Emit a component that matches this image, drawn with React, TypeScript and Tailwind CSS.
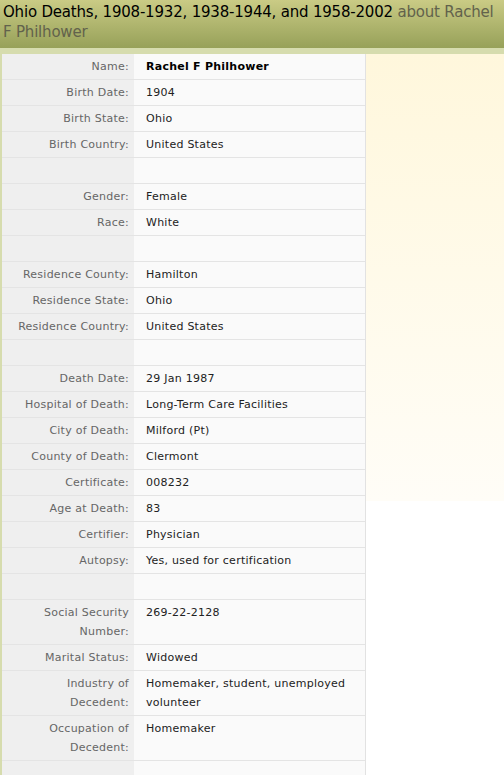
const rows: [string, string][] = [
  ['Name:', 'Rachel F Philhower'],
  ['Birth Date:', '1904'],
  ['Birth State:', 'Ohio'],
  ['Birth Country:', 'United States'],
  ['', ''],
  ['Gender:', 'Female'],
  ['Race:', 'White'],
  ['', ''],
  ['Residence County:', 'Hamilton'],
  ['Residence State:', 'Ohio'],
  ['Residence Country:', 'United States'],
  ['', ''],
  ['Death Date:', '29 Jan 1987'],
  ['Hospital of Death:', 'Long-Term Care Facilities'],
  ['City of Death:', 'Milford (Pt)'],
  ['County of Death:', 'Clermont'],
  ['Certificate:', '008232'],
  ['Age at Death:', '83'],
  ['Certifier:', 'Physician'],
  ['Autopsy:', 'Yes, used for certification'],
  ['', ''],
  ['Social Security Number:', '269-22-2128'],
  ['Marital Status:', 'Widowed'],
  ['Industry of Decedent:', 'Homemaker, student, unemployed volunteer'],
  ['Occupation of Decedent:', 'Homemaker'],
  ['', ''],
]

export default function App() {
  return (
    <div className="min-h-[775px] bg-white font-['DejaVu_Sans',Verdana,sans-serif]">
      <div className="bg-gradient-to-b from-[#cacb85] to-[#97a159] px-[3px] pt-[2px] pb-[6px] text-[15px] leading-[20px] tracking-[-0.2px] text-black">
        Ohio Deaths, 1908-1932, 1938-1944, and 1958-2002{' '}
        <span className="text-[#62624c]">about Rachel F Philhower</span>
      </div>
      <div className="h-[6px] bg-[#d6dcae]" />
      <div className="flex">
        <div className="w-[366px] border-l-[2px] border-[#d6dcae]">
          <table className="w-full border-collapse text-[11px] leading-[19px] tracking-[0.25px]">
            <tbody>
              {rows.map(([label, value], i) => (
                <tr key={i} className="border-b border-[#e4e4e4]">
                  <td className="w-[132px] bg-[#efefef] py-[3px] pr-[5px] pl-[8px] text-right align-top text-[#666]">
                    {label || '\u00a0'}
                  </td>
                  <td
                    className={`border-r border-[#e2e2e2] bg-[#fafafa] py-[3px] pr-[8px] pl-[12px] align-top text-[#222] ${
                      i === 0 ? 'font-bold text-black' : ''
                    }`}
                  >
                    {value || '\u00a0'}
                  </td>
                </tr>
              ))}
            </tbody>
          </table>
        </div>
        <div className="h-[447px] flex-1 bg-gradient-to-b from-[#fff7dc] to-[#fffdf7]" />
      </div>
    </div>
  )
}
